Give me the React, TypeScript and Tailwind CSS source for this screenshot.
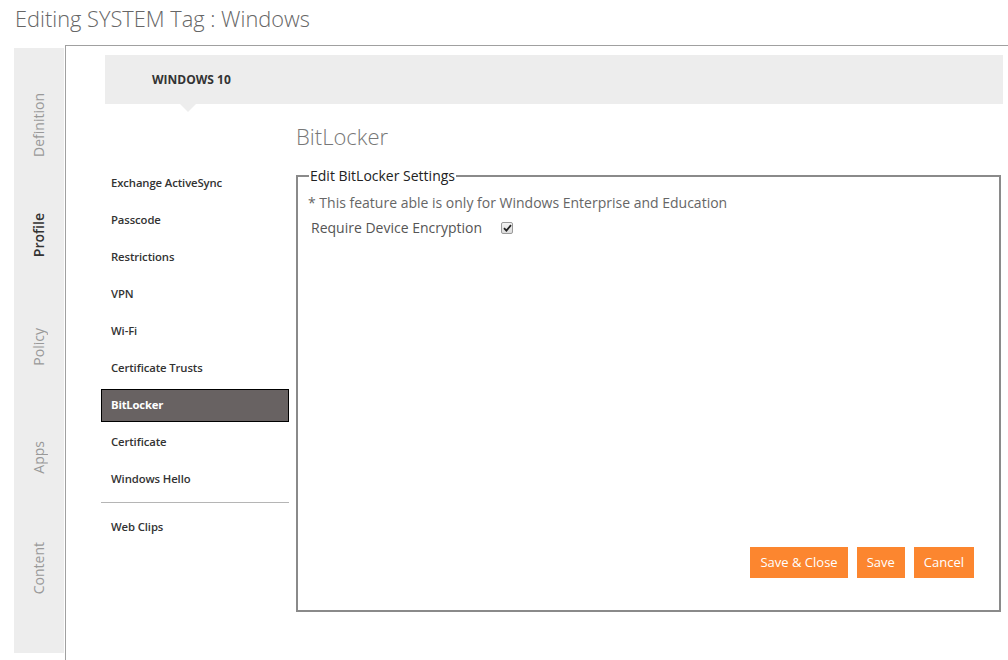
const tabs = [
  { label: "Definition", active: false },
  { label: "Profile", active: true },
  { label: "Policy", active: false },
  { label: "Apps", active: false },
  { label: "Content", active: false },
];

const navItems = [
  "Exchange ActiveSync",
  "Passcode",
  "Restrictions",
  "VPN",
  "Wi-Fi",
  "Certificate Trusts",
  "BitLocker",
  "Certificate",
  "Windows Hello",
];

function NavItem({ label, active }: { label: string; active?: boolean }) {
  return (
    <div className="py-[2px]">
      <div
        className={
          active
            ? "h-[33px] flex items-center px-[9px] border border-black bg-[#686262] text-white font-bold text-[11.3px] tracking-[-0.2px]"
            : "h-[33px] flex items-center px-[9px] border border-transparent text-[#333] font-semibold text-[11.3px] tracking-[-0.1px]"
        }
      >
        {label}
      </div>
    </div>
  );
}

export default function App() {
  return (
    <div className="w-[1008px] h-[660px] overflow-hidden bg-white font-['Open_Sans',sans-serif]">
      {/* Title */}
      <div className="h-[45px] pl-[15px] pt-[4px]">
        <h1 className="text-[21.8px] leading-[30px] font-light text-[#666]">Editing SYSTEM Tag : Windows</h1>
      </div>

      <div className="flex h-[615px]">
        {/* Vertical tabs */}
        <div className="w-[50px] ml-[14px] mr-[1px] mt-[3px] h-[605px] bg-[#ededed] pt-[21px] flex flex-col">
          {tabs.map((t) => (
            <div key={t.label} className="h-[111px] flex items-center justify-center">
              <span
                className={
                  t.active
                    ? "[writing-mode:vertical-rl] rotate-180 text-[14px] font-semibold text-[#333] pl-[2px]"
                    : "[writing-mode:vertical-rl] rotate-180 text-[14px] text-[#999] pl-[2px]"
                }
              >
                {t.label}
              </span>
            </div>
          ))}
        </div>

        {/* Main panel */}
        <div className="flex-1 border-l border-t border-[#a0a0a0] pl-[35px] pt-[9px]">
          <div className="relative ml-[4px] mr-[5px] h-[49px] bg-[#ededed] flex items-center pl-[47px]">
            <span className="text-[12px] font-bold text-[#333]">WINDOWS 10</span>
            <div className="absolute left-[75px] top-[49px] w-0 h-0 border-l-[8px] border-r-[8px] border-t-[8px] border-l-transparent border-r-transparent border-t-[#ededed]" />
          </div>

          <div className="flex gap-[7px]">
            {/* Left nav */}
            <div className="w-[188px] mt-[61px] flex flex-col">
              {navItems.map((n) => (
                <NavItem key={n} label={n} active={n === "BitLocker"} />
              ))}
              <div className="mt-[4px] mb-[6px] border-t border-[#b5b5b5]" />
              <NavItem label="Web Clips" />
            </div>

            {/* Content */}
            <div className="w-[705px]">
              <h2 className="mt-[17px] text-[22px] leading-[30px] font-light text-[#777]">BitLocker</h2>
              <fieldset className="mt-[15px] border-2 border-[#8a8a8a] px-[10px]">
                <legend className="ml-[1px] px-[1px] text-[14px] leading-[20px] text-[#222]">Edit BitLocker Settings</legend>
                <div className="h-[424px] flex flex-col">
                  <p className="mt-[7px] text-[14px] leading-[20px] text-[#666]">
                    * This feature able is only for Windows Enterprise and Education
                  </p>
                  <div className="mt-[5px] pl-[3px] flex items-center text-[14px] leading-[20px] text-[#555]">
                    <span>Require Device Encryption</span>
                    <span className="ml-[19px] w-[12px] h-[12px] border border-[#9a9a9a] rounded-[2px] bg-gradient-to-b from-[#f4f4f4] to-[#dcdcdc] flex items-center justify-center">
                      <svg width="9" height="8" viewBox="0 0 9 8">
                        <path d="M1 4.2 L3.4 6.6 L8 1.2" fill="none" stroke="#222" strokeWidth="1.8" />
                      </svg>
                    </span>
                  </div>
                  <div className="mt-auto mb-[32px] pr-[15px] flex justify-end gap-[9px]">
                    <button className="h-[31px] px-[10px] bg-[#fc862f] text-white text-[13px]">Save &amp; Close</button>
                    <button className="h-[31px] px-[10px] bg-[#fc862f] text-white text-[13px]">Save</button>
                    <button className="h-[31px] px-[10px] bg-[#fc862f] text-white text-[13px]">Cancel</button>
                  </div>
                </div>
              </fieldset>
            </div>
          </div>
        </div>
      </div>
    </div>
  );
}
